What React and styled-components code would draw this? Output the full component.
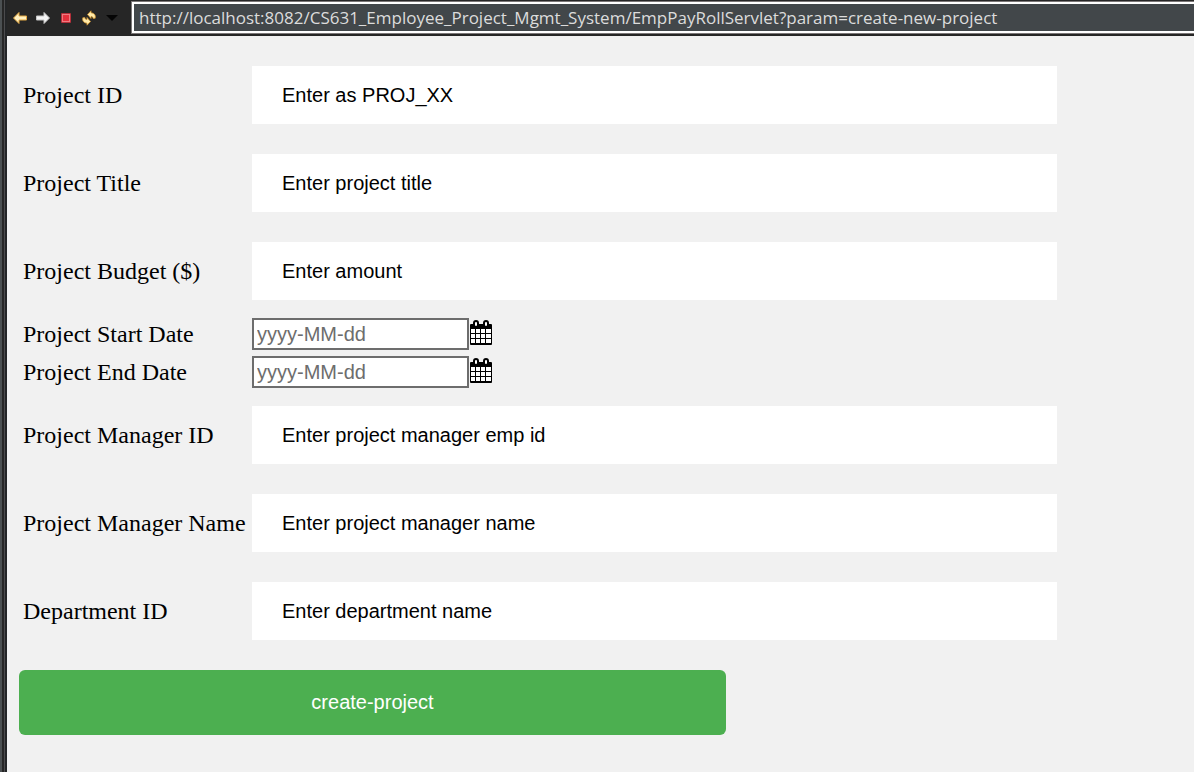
import React from "react";
import styled, { createGlobalStyle } from "styled-components";

const GlobalStyle = createGlobalStyle`
  * { box-sizing: border-box; }
  body { margin: 0; background: #f1f1f1; }
`;

const Window = styled.div`
  display: flex;
  min-height: 100vh;
  background: #262626;
`;

const Sash = styled.div`
  flex: none;
  width: 7px;
  background: linear-gradient(to right, #4b5052 2px, #262626 2px 4px, #4b4b4d 4px 5px, #232527 5px);
`;

const Browser = styled.div`
  flex: 1;
  min-width: 0;
  display: flex;
  flex-direction: column;
`;

const Toolbar = styled.header`
  display: flex;
  align-items: center;
  height: 36px;
  padding: 0 0 1px 1px;
`;

const Tools = styled.nav`
  display: flex;
  align-items: center;
  flex: none;
  width: 124px;
`;

const ToolButton = styled.button`
  display: flex;
  justify-content: center;
  width: 23px;
  padding: 0;
  border: 0;
  background: none;
`;

const Address = styled.input`
  flex: 1;
  min-width: 0;
  height: 31px;
  padding: 0 5px;
  border: 2px solid #fff;
  border-right: 0;
  outline: 1px solid #7c7878;
  border-radius: 0;
  background: #42474a;
  color: #dcdcdc;
  font: 17px "Open Sans", "Noto Sans", sans-serif;
`;

const Page = styled.main`
  flex: 1;
  padding: 15px 0 37px 12px;
  background: #f1f1f1;
`;

const Row = styled.div`
  display: grid;
  grid-template-columns: 229px minmax(0, 805px);
  align-items: center;
  height: ${(p) => (p.$compact ? 38 : 88)}px;
  padding-left: 4px;
`;

const Label = styled.label`
  color: #000;
  font: 24px "Liberation Serif", serif;
  white-space: nowrap;
`;

const TextField = styled.input`
  width: 100%;
  height: 58px;
  padding: 0 30px;
  border: 0;
  background: #fff;
  font: 20px "Liberation Sans", sans-serif;
  &::placeholder { color: #000; opacity: 1; }
`;

const DateGroup = styled.div`
  display: flex;
  align-items: center;
`;

const DateField = styled.input`
  width: 217px;
  height: 32px;
  padding: 0 3px;
  border: 2px solid #6d6d6d;
  border-radius: 0;
  background: #fff;
  font: 20px "Liberation Sans", sans-serif;
  &::placeholder { color: #6d6d6d; opacity: 1; }
`;

const PickerButton = styled.button`
  display: flex;
  padding: 0;
  border: 0;
  background: none;
`;

const Submit = styled.button`
  display: block;
  width: calc(60% + 2px);
  height: 65px;
  margin-top: 15px;
  border: 0;
  border-radius: 6px;
  background: #4caf50;
  color: #fff;
  font: 20px "Liberation Sans", sans-serif;
`;

const fields = [
  { id: "project-id", label: "Project ID", hint: "Enter as PROJ_XX" },
  { id: "title", label: "Project Title", hint: "Enter project title" },
  { id: "budget", label: "Project Budget ($)", hint: "Enter amount" },
  { id: "start", label: "Project Start Date", hint: "yyyy-MM-dd", date: true },
  { id: "end", label: "Project End Date", hint: "yyyy-MM-dd", date: true },
  { id: "manager-id", label: "Project Manager ID", hint: "Enter project manager emp id" },
  { id: "manager-name", label: "Project Manager Name", hint: "Enter project manager name" },
  { id: "department", label: "Department ID", hint: "Enter department name" },
];

const Arrow = ({ forward }) => (
  <svg width="16" height="14" viewBox="0 0 16 14">
    <path
      d="M1.500 7 7 1.500V5h7.500v4H7v3.500z"
      transform={forward ? "translate(16 0) scale(-1 1)" : undefined}
      fill={forward ? "#f4f4f4" : "#fff0c0"}
      stroke={forward ? "#c4c4c4" : "#e3a740"}
      strokeLinejoin="round"
    />
  </svg>
);

const StopIcon = () => (
  <svg width="12" height="12" viewBox="0 0 12 12">
    <rect x="1" y="1" width="10" height="10" rx="1" fill="#b5303a" />
    <rect x="2" y="2" width="8" height="8" fill="#ee7a80" />
    <rect x="3" y="3" width="6" height="6" fill="#e5303c" />
  </svg>
);

const RefreshIcon = () => (
  <svg width="16" height="16" viewBox="0 0 16 16" fill="#ffe9a8" stroke="#cf9430" strokeWidth=".8" strokeLinejoin="round">
    <path d="M6.500 4.500 10 .8v2c3 .2 5 2.200 4.200 5.400l-2 .3c-.2-1.500-1-2-2.200-2v2z" />
    <path d="M9.500 11.500 6 15.200v-2c-3-.2-5-2.200-4.200-5.400l2-.3c.2 1.500 1 2 2.200 2v-2z" />
  </svg>
);

const CaretIcon = () => (
  <svg width="12" height="6" viewBox="0 0 12 6"><path d="M0 0h12L6 6z" fill="#050505" /></svg>
);

const CalendarIcon = () => (
  <svg width="24" height="28" viewBox="0 0 24 28">
    <rect x="1" y="4" width="22" height="21" rx="1" fill="#000" />
    <path
      d="M2 9h4v4H2zM7 9h4v4H7zM12 9h4v4h-4zM17 9h5v4h-5zM2 14h4v4H2zM7 14h4v4H7zM12 14h4v4h-4zM17 14h5v4h-5zM2 19h4v4H2zM7 19h4v4H7zM12 19h4v4h-4zM17 19h5v4h-5z"
      fill="#fff"
    />
    <rect x="5" y="1" width="4" height="6" rx="2" fill="#fff" stroke="#000" strokeWidth="2" />
    <rect x="15" y="1" width="4" height="6" rx="2" fill="#fff" stroke="#000" strokeWidth="2" />
  </svg>
);

export default function App() {
  return (
    <Window>
      <GlobalStyle />
      <Sash />
      <Browser>
        <Toolbar>
          <Tools aria-label="Navigation">
            <ToolButton aria-label="Back"><Arrow /></ToolButton>
            <ToolButton aria-label="Forward"><Arrow forward /></ToolButton>
            <ToolButton aria-label="Stop"><StopIcon /></ToolButton>
            <ToolButton aria-label="Refresh"><RefreshIcon /></ToolButton>
            <ToolButton aria-label="History"><CaretIcon /></ToolButton>
          </Tools>
          <Address
            aria-label="Address"
            defaultValue="http://localhost:8082/CS631_Employee_Project_Mgmt_System/EmpPayRollServlet?param=create-new-project"
          />
        </Toolbar>
        <Page>
          <form onSubmit={(e) => e.preventDefault()}>
            {fields.map((f) => (
              <Row key={f.id} $compact={f.date}>
                <Label htmlFor={f.id}>{f.label}</Label>
                {f.date ? (
                  <DateGroup>
                    <DateField id={f.id} placeholder={f.hint} />
                    <PickerButton type="button" aria-label={`Choose ${f.label}`}><CalendarIcon /></PickerButton>
                  </DateGroup>
                ) : (
                  <TextField id={f.id} placeholder={f.hint} />
                )}
              </Row>
            ))}
            <Submit type="submit">create-project</Submit>
          </form>
        </Page>
      </Browser>
    </Window>
  );
}
